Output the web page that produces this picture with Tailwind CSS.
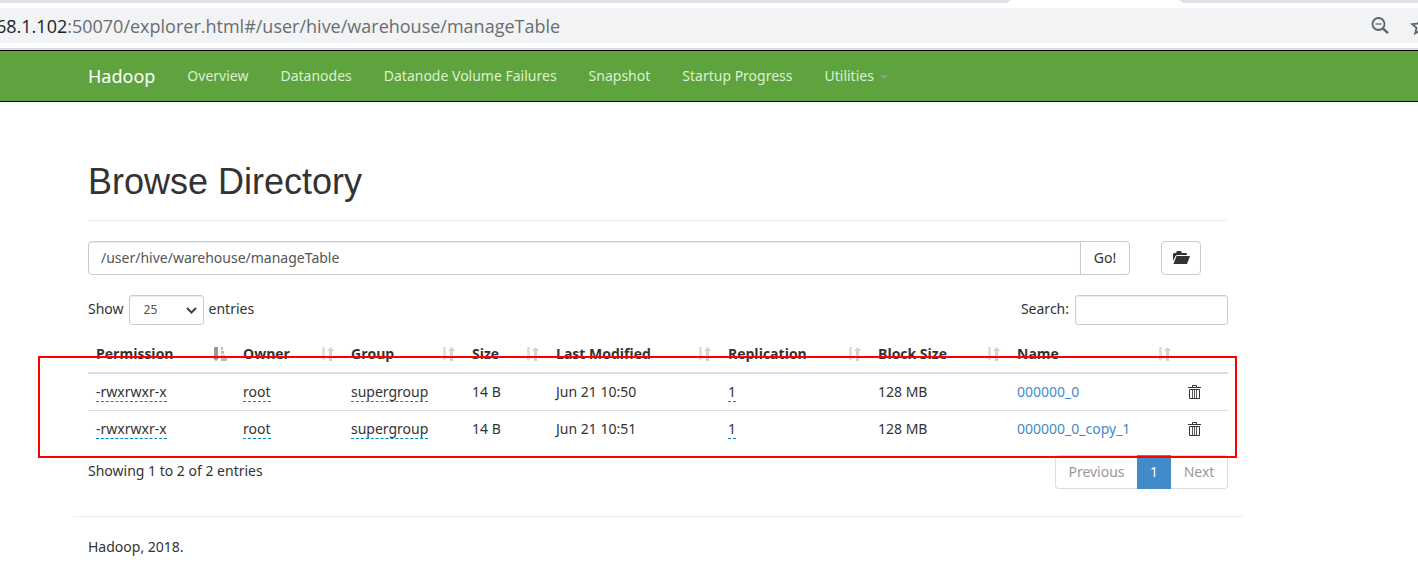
<!DOCTYPE html>
<html lang="en">
<head>
<meta charset="utf-8">
<title>Browsing HDFS</title>
<script src="https://cdn.jsdelivr.net/npm/@tailwindcss/browser@4"></script>
</head>
<body class="bg-white font-['Noto_Sans','Open_Sans',sans-serif] text-sm leading-5 text-[#333]">
<svg class="hidden">
  <symbol id="sort" viewBox="0 0 14 14"><path fill="#e0e0e0" d="M1 0h3v11h1l-2.500 3L0 11h1z"/><path fill="#d3d3d3" d="M8 14h3V4h2.500L9.500 0 6 4h2z"/></symbol>
  <symbol id="sort-asc" viewBox="0 0 14 14"><path fill="#999" d="M1 0h4v11h1l-3 3L0 11h1z"/><path fill="#bbb" d="M8 0h2v3H8zM8 4h3v3H8zM8 8h4v2H8zM8 11h6v3H8z"/></symbol>
  <symbol id="trash" viewBox="0 0 14 16"><path fill="none" stroke="#333" d="M0 3.500h13M4.500 3V1.500h4V3M1.500 5.500h10v9h-10z"/><path fill="none" stroke="#555" d="M4.500 6v8M6.500 6v8M8.500 6v8"/></symbol>
</svg>

<header>
  <div class="flex h-[3px] justify-between">
    <div class="w-[1011px] bg-[#dee1e6] [clip-path:polygon(0_0,100%_0,calc(100%-4px)_100%,0_100%)]"></div>
    <div class="w-[239px] bg-[#dee1e6] [clip-path:polygon(0_0,100%_0,100%_100%,4px_100%)]"></div>
  </div>
  <div class="my-[5px] flex h-[35px] items-center justify-between overflow-hidden bg-[#f1f3f4]">
    <div class="-ml-1 font-['Open_Sans',sans-serif] text-lg whitespace-nowrap text-[#6a6d71]"><span class="text-[#202124]">68.1.102</span>:50070/explorer.html#/user/hive/warehouse/manageTable</div>
    <div class="-mr-3 flex items-center gap-5 text-[#5f6368]">
      <button aria-label="Zoom"><svg class="block size-5" viewBox="0 0 20 20" fill="none" stroke="currentColor"><circle cx="8.500" cy="8" r="6" stroke-width="1.800"/><path d="M5.500 8h6" stroke-width="1.300"/><path d="M13 12.500l5 4.700" stroke-width="2.400"/></svg></button>
      <button aria-label="Bookmark"><svg class="block size-5" viewBox="0 0 20 20" fill="none" stroke="currentColor" stroke-width="1.800"><path d="M10 2.500l2.200 5.200 5.600.5-4.300 3.700 1.300 5.500-4.800-2.900-4.800 2.900 1.300-5.500-4.300-3.700 5.600-.5z"/></svg></button>
    </div>
  </div>
  <div class="h-0.5 bg-[#d7dade]"></div>
  <nav class="border-y border-[#080808] bg-[#5fa33e]">
    <div class="ml-[88px] flex h-[50px] items-center gap-8 whitespace-nowrap text-[#dcf0d3]">
      <a href="#" class="text-lg text-white">Hadoop</a>
      <a href="#">Overview</a>
      <a href="#">Datanodes</a>
      <a href="#">Datanode Volume Failures</a>
      <a href="#">Snapshot</a>
      <a href="#">Startup Progress</a>
      <a href="#" class="flex items-center gap-1.5">Utilities <span class="mt-0.5 border-x-4 border-t-4 border-x-transparent border-t-[#999]"></span></a>
    </div>
  </nav>
</header>

<main class="relative ml-[73px] max-w-[1170px] px-[15px] pt-[60px]">
  <h1 class="border-b border-[#eee] pb-[19px] font-['Liberation_Sans',Arial,sans-serif] text-4xl leading-[39px]">Browse Directory</h1>

  <form class="mt-5 flex h-[34px] pr-[27px]">
    <input type="text" aria-label="Directory" value="/user/hive/warehouse/manageTable" class="min-w-0 flex-1 rounded-l border border-[#ccc] px-3 text-[#555] shadow-[inset_0_1px_1px_rgba(0,0,0,0.075)]">
    <button type="button" class="-ml-px w-[50px] rounded-r border border-[#ccc]">Go!</button>
    <button type="button" aria-label="Parent directory" class="ml-[31px] flex w-10 items-center justify-center rounded border border-[#ccc]">
      <svg class="h-[14px] w-[18px]" viewBox="0 0 18 14" fill="#333"><path d="M1 10V3l1-1h2l1-2h4l1 2h4l1 1v1H5L3.500 5z"/><path d="M4.500 5H18l-3 8H1.500z"/></svg>
    </button>
  </form>

  <div class="mt-5 flex items-center justify-between">
    <label class="flex items-center gap-[5px]"><span class="-mt-0.5">Show</span>
      <span class="relative"><select class="block h-[30px] w-[75px] appearance-none rounded-[3px] border border-[#ccc] px-3.5 text-xs text-[#555] shadow-[inset_0_1px_1px_rgba(0,0,0,0.075)]"><option>25</option></select>
      <svg class="pointer-events-none absolute top-3 right-[7px] h-[7px] w-[11px]" viewBox="0 0 11 7" fill="none" stroke="#444" stroke-width="2"><path d="M1 1l4.500 4.500L10 1"/></svg></span>
      <span class="-mt-0.5">entries</span></label>
    <label class="flex items-center gap-1.5"><span class="-mt-0.5">Search:</span>
      <input type="search" class="h-[30px] w-[153px] rounded-[3px] border border-[#ccc] px-2.5 text-xs shadow-[inset_0_1px_1px_rgba(0,0,0,0.075)]"></label>
  </div>

  <table class="mt-[11px] w-full table-fixed border-collapse whitespace-nowrap [&_td]:px-2 [&_td]:py-2 [&_th]:px-2 [&_th]:py-2 [&_td>span]:border-b [&_td>span]:border-dashed [&_td>span]:border-[#08c]">
    <colgroup><col class="w-[147px]"><col class="w-[108px]"><col class="w-[121px]"><col class="w-[84px]"><col class="w-[172px]"><col class="w-[150px]"><col class="w-[139px]"><col class="w-[171px]"><col></colgroup>
    <thead class="border-b-2 border-[#ddd] text-left font-['Open_Sans',sans-serif]">
      <tr>
        <th><div class="flex items-center justify-between">Permission<svg class="size-3.5"><use href="#sort-asc"/></svg></div></th>
        <th><div class="flex items-center justify-between">Owner<svg class="size-3.5"><use href="#sort"/></svg></div></th>
        <th><div class="flex items-center justify-between">Group<svg class="size-3.5"><use href="#sort"/></svg></div></th>
        <th><div class="flex items-center justify-between">Size<svg class="size-3.5"><use href="#sort"/></svg></div></th>
        <th><div class="flex items-center justify-between">Last Modified<svg class="size-3.5"><use href="#sort"/></svg></div></th>
        <th><div class="flex items-center justify-between">Replication<svg class="size-3.5"><use href="#sort"/></svg></div></th>
        <th><div class="flex items-center justify-between">Block Size<svg class="size-3.5"><use href="#sort"/></svg></div></th>
        <th><div class="flex items-center justify-between">Name<svg class="size-3.5"><use href="#sort"/></svg></div></th>
        <th></th>
      </tr>
    </thead>
    <tbody>
      <tr>
        <td><span>-rwxrwxr-x</span></td><td><span>root</span></td><td><span>supergroup</span></td><td>14 B</td><td>Jun 21 10:50</td><td><span>1</span></td><td>128 MB</td><td><a href="#" class="text-[#428bca]">000000_0</a></td>
        <td><button aria-label="Delete 000000_0" class="block"><svg class="block h-4 w-3.5"><use href="#trash"/></svg></button></td>
      </tr>
      <tr class="border-t border-[#ddd]">
        <td><span>-rwxrwxr-x</span></td><td><span>root</span></td><td><span>supergroup</span></td><td>14 B</td><td>Jun 21 10:51</td><td><span>1</span></td><td>128 MB</td><td><a href="#" class="text-[#428bca]">000000_0_copy_1</a></td>
        <td><button aria-label="Delete 000000_0_copy_1" class="block"><svg class="block h-4 w-3.5"><use href="#trash"/></svg></button></td>
      </tr>
    </tbody>
  </table>

  <div class="mt-2 flex items-start justify-between">
    <p class="pt-1.5">Showing 1 to 2 of 2 entries</p>
    <div class="flex h-[34px] text-[#999]">
      <button class="w-[82px] rounded-l border border-r-0 border-[#ddd]">Previous</button>
      <button class="w-[34px] bg-[#428bca] text-white">1</button>
      <button class="w-[57px] rounded-r border border-l-0 border-[#ddd]">Next</button>
    </div>
  </div>

  <div class="pointer-events-none absolute top-[254px] right-1.5 -left-[35px] h-[102px] border-2 border-[#fe0000]"></div>

  <footer class="-mx-[15px] mt-[27px] border-t border-[#eee] px-[15px] pt-5">Hadoop, 2018.</footer>
</main>
</body>
</html>
